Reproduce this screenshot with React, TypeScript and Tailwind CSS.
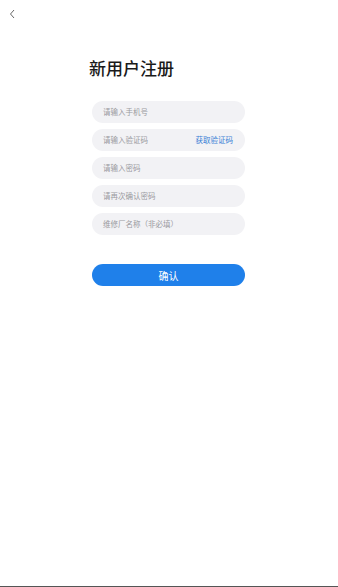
import React from "react";

const fields = ["请输入手机号", "请输入验证码", "请输入密码", "请再次确认密码", "维修厂名称（非必填）"];

export default function App() {
  return (
    <div
      className="flex h-[587px] w-full flex-col border-b border-[#555555] bg-white"
      style={{ fontFamily: '"Noto Sans CJK SC", "Noto Sans", sans-serif' }}
    >
      <div className="flex h-[28px] items-start pl-[9px] pt-[9px]">
        <svg width="6" height="10" viewBox="0 0 6 10" fill="none">
          <polyline points="5,1 1.5,5 5,9" stroke="#666" strokeWidth="1" />
        </svg>
      </div>
      <div className="ml-[92px] flex w-[153px] flex-col">
        <div className="-ml-[3px] mt-[29px] text-[17px] font-medium leading-[22px] text-[#1a1a1a]">新用户注册</div>
        <div className="mt-[22px] flex flex-col gap-[6px]">
          {fields.map((f, i) => (
            <div key={f} className="flex h-[22px] items-center justify-between rounded-full bg-[#f2f2f5] pl-[11px] pr-[12px]">
              <span className="text-[7.5px] leading-none text-[#9a9a9f]">{f}</span>
              {i === 1 && <span className="text-[7.5px] leading-none text-[#3a7fd6]">获取验证码</span>}
            </div>
          ))}
        </div>
        <div className="mt-[29px] flex h-[22px] items-center justify-center rounded-full bg-[#1f80ea] text-[10px] text-white">
          确认
        </div>
      </div>
    </div>
  );
}
